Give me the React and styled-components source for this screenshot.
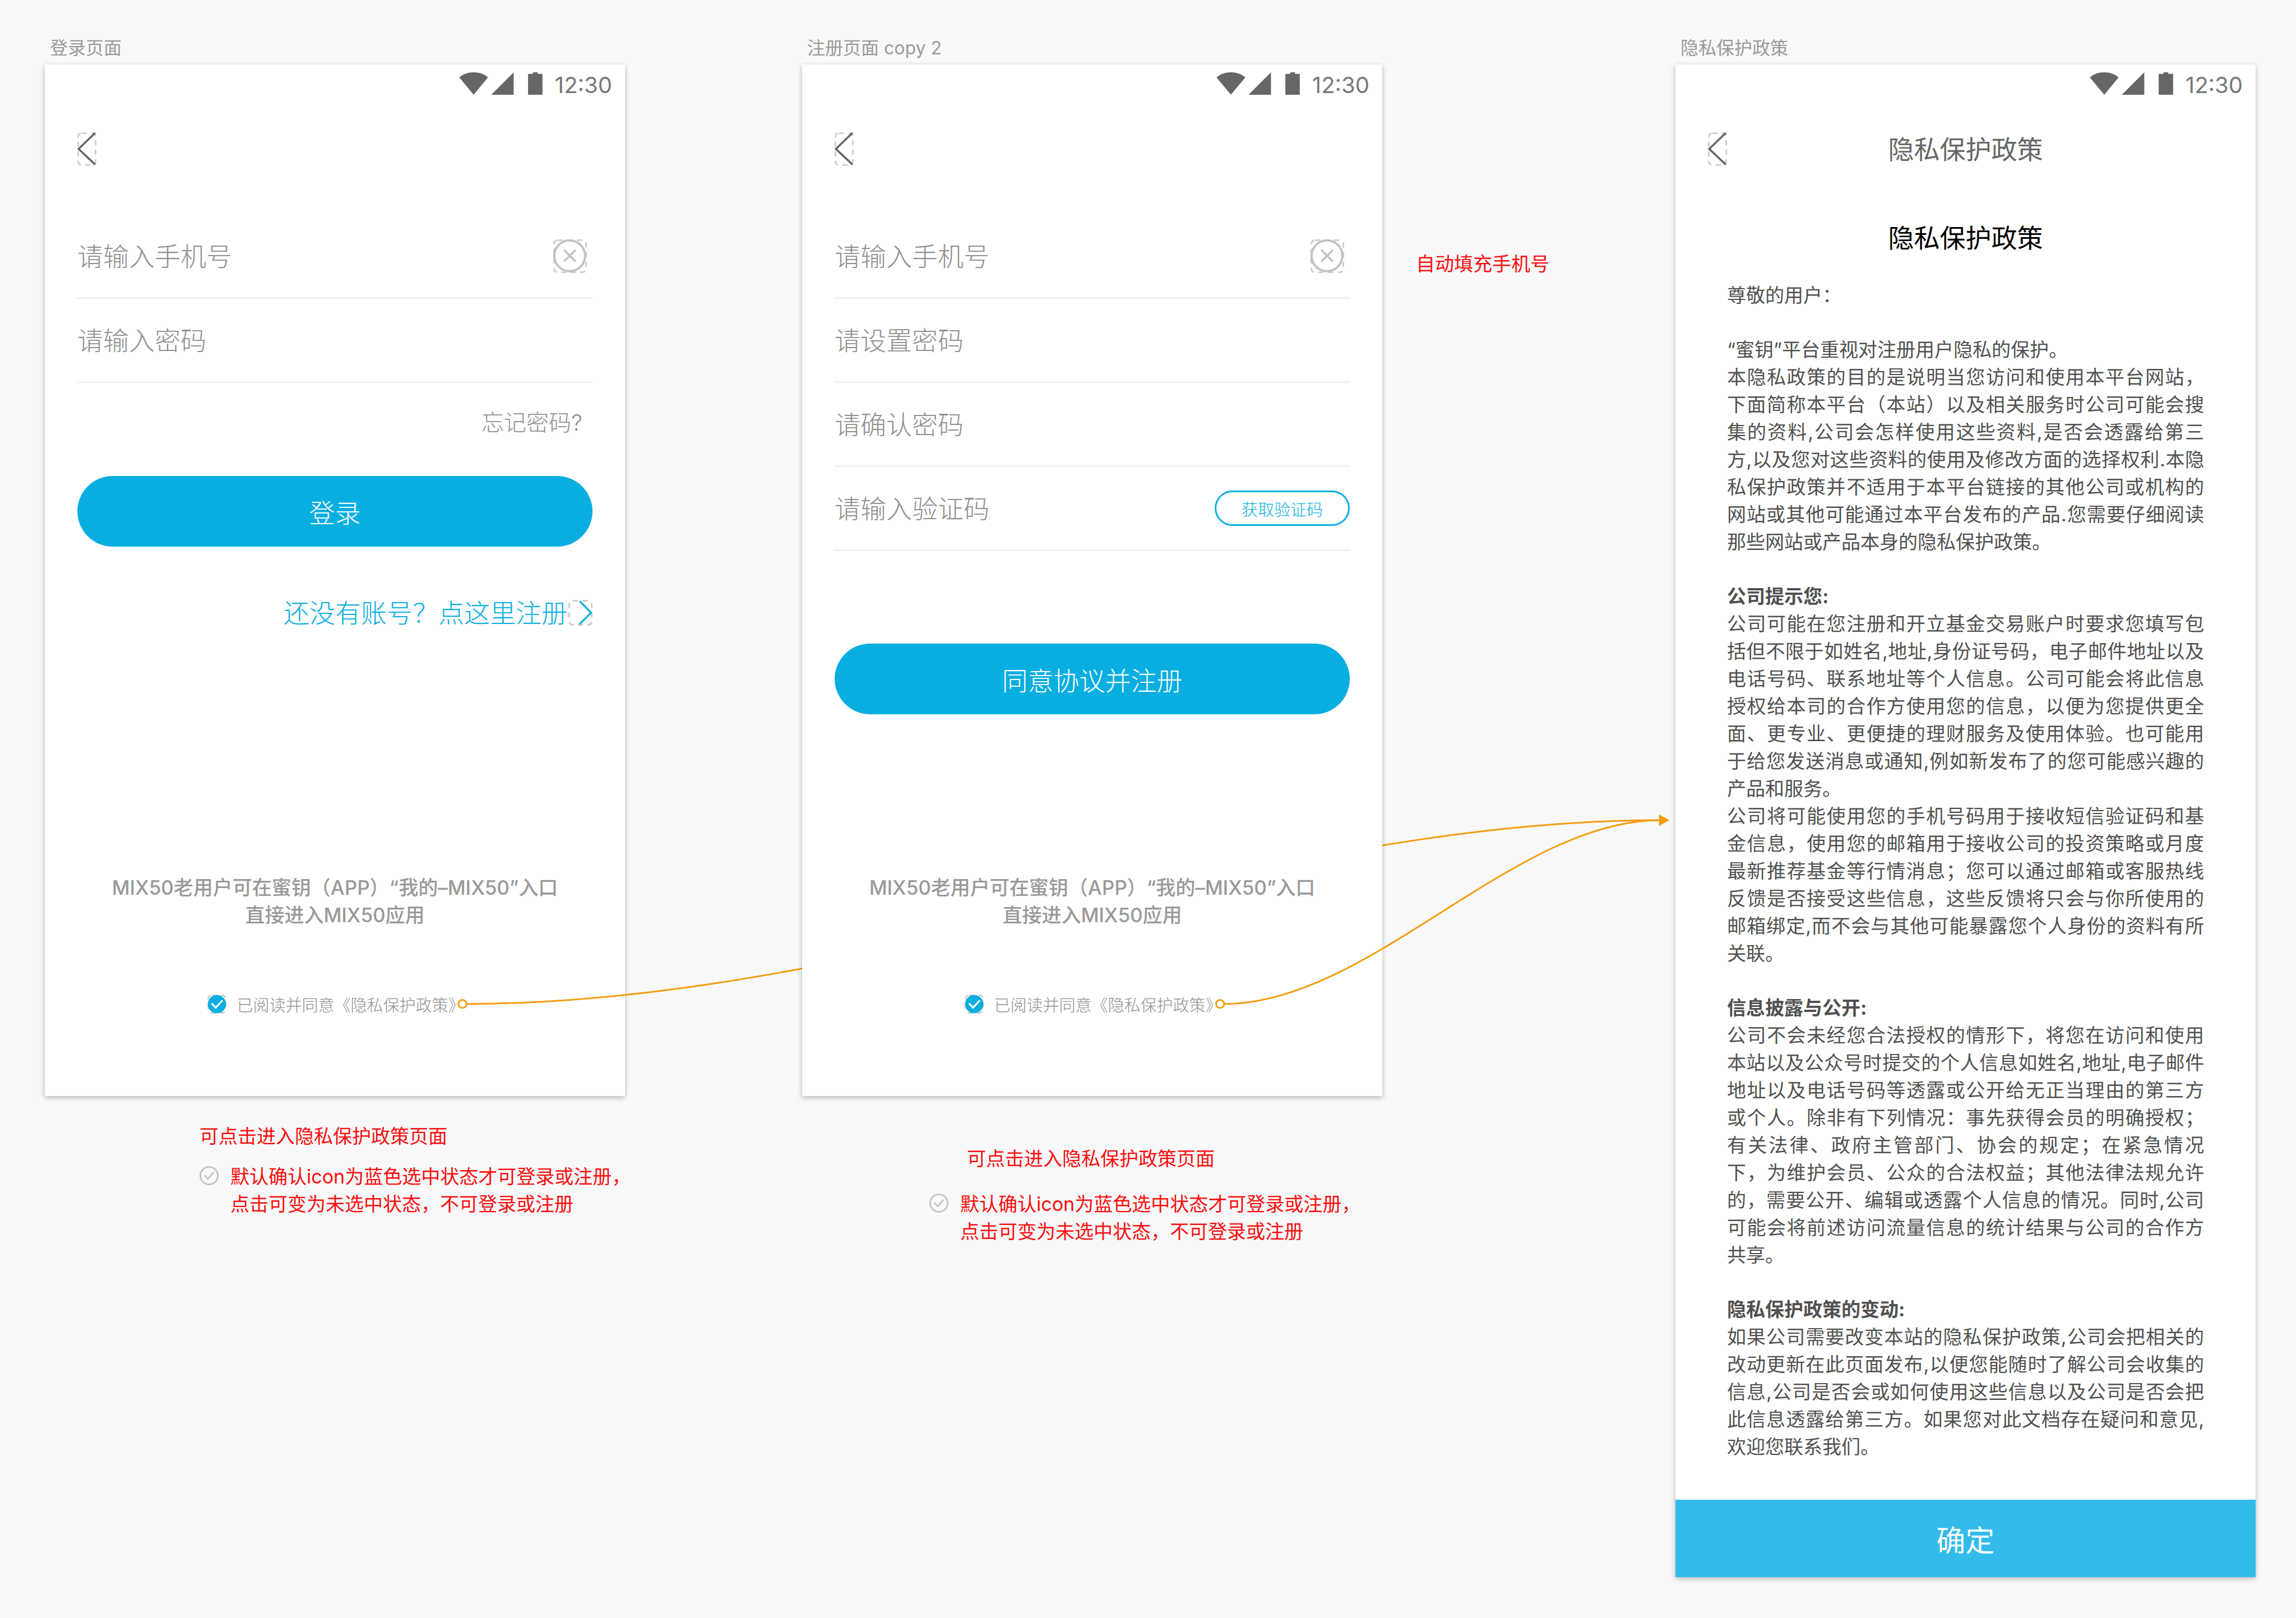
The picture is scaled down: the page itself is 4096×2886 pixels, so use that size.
import React from "react";
import styled, { createGlobalStyle } from "styled-components";

const color = {
  canvas: "#f9f9f9",
  brand: "#09aee0",
  confirm: "#33bceb",
  muted: "#999999",
  field: "#909090",
  line: "#f0f0f0",
  frame: "#cccccc",
  icon: "#666666",
  body: "#505050",
  note: "#fc0d0d",
  flow: "#f59b0c",
};

const size = { small: 29, label: 32, body: 34, hint: 35, link: 40, title: 46, confirm: 52 };

const thin = 300;

const GlobalStyle = createGlobalStyle`
  *, *::before, *::after { box-sizing: border-box; }
  body {
    margin: 0;
    background: ${color.canvas};
    font-family: Inter, "Noto Sans CJK SC", sans-serif;
  }
  h1, h2, h3, p { margin: 0; font-weight: 400; }
  button, input { font-family: inherit; }
  a { color: inherit; text-decoration: none; }
  svg { display: block; flex: none; }
`;

const Canvas = styled.main`
  position: relative;
  display: grid;
  grid-template-columns: 1035fr 316fr 1035fr 523fr 1035fr;
  align-items: start;
  min-height: 100vh;
  padding: 64px 72px 75px 80px;
`;

const Column = styled.section`
  grid-column: ${(p) => p.$column};
  position: relative;
  z-index: ${(p) => p.$layer};
  min-width: 0;
`;

const BoardName = styled.h2`
  padding: 0 9px 7px;
  font-size: ${size.label}px;
  line-height: 44px;
  color: ${color.muted};
`;

const Screen = styled.div`
  display: flex;
  flex-direction: column;
  aspect-ratio: ${(p) => (p.$tall ? "auto" : "9 / 16")};
  background: #ffffff;
  box-shadow: 0 3px 9px rgba(0, 0, 0, 0.28);
`;

const StatusBar = styled.div`
  display: flex;
  justify-content: flex-end;
  align-items: flex-end;
  gap: 22px;
  height: 69px;
  padding: 14px 23px 15px;
`;

const Clock = styled.time`
  font-size: ${size.link}px;
  line-height: 34px;
  color: #777777;
`;

const NavBar = styled.header`
  display: grid;
  grid-template-columns: 60px 1fr 60px;
  align-items: center;
  height: 163px;
  padding: 0 58px;
`;

const NavTitle = styled.h1`
  font-size: ${size.title}px;
  line-height: 60px;
  text-align: center;
  color: ${color.icon};
`;

const IconButton = styled.button`
  display: flex;
  padding: 0;
  border: 0;
  background: none;
`;

const Form = styled.form`
  display: flex;
  flex: 1;
  flex-direction: column;
  padding: 36px 58px 147px;
`;

const Field = styled.div`
  display: flex;
  align-items: center;
  height: 150px;
  padding-right: ${(p) => p.$inset || 0}px;
  border-bottom: 3px solid ${color.line};
`;

const FieldInput = styled.input`
  flex: 1;
  min-width: 0;
  height: 80px;
  padding: 0;
  border: 0;
  outline: 0;
  background: none;
  font-size: ${size.title}px;
  font-weight: ${thin};
  color: ${color.icon};
  &::placeholder { color: ${color.field}; opacity: 1; }
`;

const CodeButton = styled.button`
  width: 241px;
  height: 63px;
  padding: 0;
  border: 3px solid ${color.brand};
  border-radius: 32px;
  background: #ffffff;
  font-size: ${size.small}px;
  font-weight: ${thin};
  color: ${color.brand};
`;

const ForgotLink = styled.a`
  align-self: flex-end;
  margin-top: 41px;
  padding-right: 18px;
  font-size: ${size.link}px;
  font-weight: ${thin};
  line-height: 60px;
  color: ${color.field};
`;

const PrimaryButton = styled.button`
  flex: none;
  height: 126px;
  margin-top: ${(p) => p.$gap}px;
  border: 0;
  border-radius: 63px;
  background: ${color.brand};
  font-size: ${size.title}px;
  font-weight: ${thin};
  color: #ffffff;
`;

const RegisterLink = styled.a`
  display: flex;
  align-self: flex-end;
  align-items: center;
  gap: 2px;
  margin-top: 95px;
  font-size: ${size.title}px;
  font-weight: ${thin};
  line-height: 46px;
  color: ${color.brand};
`;

const Hint = styled.p`
  margin-top: auto;
  font-size: ${size.hint}px;
  font-weight: 500;
  line-height: 49px;
  text-align: center;
  color: ${color.muted};
`;

const Agreement = styled.label`
  display: flex;
  justify-content: center;
  align-items: center;
  gap: 18px;
  height: 34px;
  margin-top: 117px;
  padding-left: 4px;
  font-size: ${size.small}px;
  font-weight: ${thin};
  color: ${color.field};
`;

const HiddenCheck = styled.input`
  position: absolute;
  width: 1px;
  height: 1px;
  margin: 0;
  opacity: 0;
`;

const Notes = styled.aside`
  display: flex;
  flex-direction: column;
  gap: ${(p) => p.$gap}px;
  padding-top: ${(p) => p.$top}px;
  padding-left: ${(p) => p.$left}px;
`;

const Note = styled.p`
  padding-left: ${(p) => p.$indent || 0}px;
  font-size: ${size.body}px;
  line-height: 49px;
  white-space: nowrap;
  color: ${color.note};
`;

const IconNote = styled.div`
  display: flex;
  align-items: flex-start;
  gap: 21px;
  svg { margin-top: 6px; }
`;

const SideNote = styled.aside`
  grid-column: 4;
  padding: 382px 0 0 60px;
`;

const Article = styled.article`
  display: flex;
  flex-direction: column;
  gap: 48px;
  padding: 47px 92px 70px;
  font-size: ${size.body}px;
  line-height: 49px;
  color: ${color.body};
`;

const ArticleTitle = styled.h2`
  font-size: ${size.title}px;
  line-height: 60px;
  text-align: center;
  color: #000000;
`;

const SectionTitle = styled.h3`
  font-size: ${size.body}px;
  font-weight: 700;
`;

const Line = styled.span`
  display: block;
  white-space: nowrap;
  text-align: justify;
  text-align-last: ${(p) => (p.$last ? "left" : "justify")};
`;

const ConfirmButton = styled.button`
  height: 138px;
  border: 0;
  background: ${color.confirm};
  font-size: ${size.confirm}px;
  font-weight: 400;
  color: #ffffff;
`;

const Flow = styled.svg`
  position: absolute;
  top: 0;
  left: 0;
  width: 100%;
  height: auto;
  z-index: ${(p) => p.$layer};
  pointer-events: none;
`;

const Dashes = ({ w, h }) => (
  <rect
    x="2" y="2" width={w - 4} height={h - 4} rx="9"
    fill="none" stroke={color.frame} strokeWidth="4" strokeDasharray="13 11"
  />
);

const StatusIcons = () => (
  <svg width="149" height="40" viewBox="0 0 208 56" fill={color.icon} aria-hidden="true">
    <path d="M36 56 0 12.5C10 4.500 22 0 36 0s26 4.500 36 12.500z" />
    <path d="M136 0v56H80z" />
    <path d="M184 0h12v4h12v52h-36V4h12z" />
  </svg>
);

const BackIcon = () => (
  <svg width="34" height="60" viewBox="0 0 48 84" aria-hidden="true">
    <Dashes w={48} h={84} />
    <path d="M45 1 3 41.500 45 81" fill="none" stroke={color.icon} strokeWidth="5" />
  </svg>
);

const ClearIcon = () => (
  <svg width="60" height="60" viewBox="0 0 84 84" aria-hidden="true">
    <Dashes w={84} h={84} />
    <g fill="none" stroke="#c2c2c2" strokeLinecap="round">
      <circle cx="41" cy="41" r="38.500" strokeWidth="5.500" />
      <path d="M28 27.500 54.500 54M54.500 27.500 28 54" strokeWidth="5" />
    </g>
  </svg>
);

const ForwardIcon = () => (
  <svg width="43" height="46" viewBox="0 0 60 64" aria-hidden="true">
    <Dashes w={60} h={64} />
    <path d="M28 3 56.500 32 28 60" fill="none" stroke={color.brand} strokeWidth="4.500" />
  </svg>
);

const CheckedIcon = () => (
  <svg width="34" height="34" viewBox="0 0 48 48" aria-hidden="true">
    <Dashes w={48} h={48} />
    <circle cx="24" cy="24" r="23" fill={color.brand} />
    <path d="M10.500 22 21 33 38 14.500" fill="none" stroke="#ffffff" strokeWidth="4.500" />
  </svg>
);

const UncheckedIcon = () => (
  <svg width="34" height="34" viewBox="0 0 48 48" fill="none" stroke="#c2c2c2" aria-hidden="true">
    <circle cx="24" cy="24" r="22" strokeWidth="4" />
    <path d="M12.500 23 21 32 36 15" strokeWidth="4" />
  </svg>
);

const TopBars = ({ title }) => (
  <>
    <StatusBar>
      <StatusIcons />
      <Clock>12:30</Clock>
    </StatusBar>
    <NavBar>
      <IconButton type="button" aria-label="返回"><BackIcon /></IconButton>
      {title && <NavTitle>{title}</NavTitle>}
    </NavBar>
  </>
);

const TextField = ({ label, type = "text", inset, children }) => (
  <Field $inset={inset}>
    <FieldInput type={type} placeholder={label} aria-label={label} />
    {children}
  </Field>
);

const PhoneField = () => (
  <TextField label="请输入手机号" type="tel" inset={10}>
    <IconButton type="button" aria-label="清除"><ClearIcon /></IconButton>
  </TextField>
);

const FormFooter = () => (
  <>
    <Hint>
      MIX50老用户可在蜜钥（APP）“我的–MIX50”入口
      <br />
      直接进入MIX50应用
    </Hint>
    <Agreement>
      <HiddenCheck type="checkbox" defaultChecked />
      <CheckedIcon />
      <span>
        已阅读并同意<a href="#policy">《隐私保护政策》</a>
      </span>
    </Agreement>
  </>
);

const BoardNotes = ({ top, left, gap, indent }) => (
  <Notes $top={top} $left={left} $gap={gap}>
    <Note $indent={indent}>可点击进入隐私保护政策页面</Note>
    <IconNote>
      <UncheckedIcon />
      <Note>
        默认确认icon为蓝色选中状态才可登录或注册，
        <br />
        点击可变为未选中状态，不可登录或注册
      </Note>
    </IconNote>
  </Notes>
);

const policy = [
  { paragraphs: [["尊敬的用户："]] },
  {
    paragraphs: [
      ["“蜜钥”平台重视对注册用户隐私的保护。"],
      [
        "本隐私政策的目的是说明当您访问和使用本平台网站，",
        "下面简称本平台（本站）以及相关服务时公司可能会搜",
        "集的资料,公司会怎样使用这些资料,是否会透露给第三",
        "方,以及您对这些资料的使用及修改方面的选择权利.本隐",
        "私保护政策并不适用于本平台链接的其他公司或机构的",
        "网站或其他可能通过本平台发布的产品.您需要仔细阅读",
        "那些网站或产品本身的隐私保护政策。",
      ],
    ],
  },
  {
    title: "公司提示您:",
    paragraphs: [
      [
        "公司可能在您注册和开立基金交易账户时要求您填写包",
        "括但不限于如姓名,地址,身份证号码，电子邮件地址以及",
        "电话号码、联系地址等个人信息。公司可能会将此信息",
        "授权给本司的合作方使用您的信息，以便为您提供更全",
        "面、更专业、更便捷的理财服务及使用体验。也可能用",
        "于给您发送消息或通知,例如新发布了的您可能感兴趣的",
        "产品和服务。",
      ],
      [
        "公司将可能使用您的手机号码用于接收短信验证码和基",
        "金信息，使用您的邮箱用于接收公司的投资策略或月度",
        "最新推荐基金等行情消息；您可以通过邮箱或客服热线",
        "反馈是否接受这些信息，这些反馈将只会与你所使用的",
        "邮箱绑定,而不会与其他可能暴露您个人身份的资料有所",
        "关联。",
      ],
    ],
  },
  {
    title: "信息披露与公开:",
    paragraphs: [
      [
        "公司不会未经您合法授权的情形下，将您在访问和使用",
        "本站以及公众号时提交的个人信息如姓名,地址,电子邮件",
        "地址以及电话号码等透露或公开给无正当理由的第三方",
        "或个人。除非有下列情况：事先获得会员的明确授权；",
        "有关法律、政府主管部门、协会的规定；在紧急情况",
        "下，为维护会员、公众的合法权益；其他法律法规允许",
        "的，需要公开、编辑或透露个人信息的情况。同时,公司",
        "可能会将前述访问流量信息的统计结果与公司的合作方",
        "共享。",
      ],
    ],
  },
  {
    title: "隐私保护政策的变动:",
    paragraphs: [
      [
        "如果公司需要改变本站的隐私保护政策,公司会把相关的",
        "改动更新在此页面发布,以便您能随时了解公司会收集的",
        "信息,公司是否会或如何使用这些信息以及公司是否会把",
        "此信息透露给第三方。如果您对此文档存在疑问和意见,",
        "欢迎您联系我们。",
      ],
    ],
  },
];

const LoginBoard = () => (
  <Column $column={1} $layer={0}>
    <BoardName>登录页面</BoardName>
    <Screen>
      <TopBars />
      <Form>
        <PhoneField />
        <TextField label="请输入密码" type="password" />
        <ForgotLink href="#forgot">忘记密码?</ForgotLink>
        <PrimaryButton type="button" $gap={65}>登录</PrimaryButton>
        <RegisterLink href="#register">
          还没有账号？点这里注册
          <ForwardIcon />
        </RegisterLink>
        <FormFooter />
      </Form>
    </Screen>
    <BoardNotes top={47} left={276} gap={23} indent={0} />
  </Column>
);

const RegisterBoard = () => (
  <Column $column={3} $layer={2}>
    <BoardName>注册页面 copy 2</BoardName>
    <Screen>
      <TopBars />
      <Form>
        <PhoneField />
        <TextField label="请设置密码" type="password" />
        <TextField label="请确认密码" type="password" />
        <TextField label="请输入验证码">
          <CodeButton type="button">获取验证码</CodeButton>
        </TextField>
        <PrimaryButton type="button" $gap={165}>同意协议并注册</PrimaryButton>
        <FormFooter />
      </Form>
    </Screen>
    <BoardNotes top={87} left={227} gap={32} indent={67} />
  </Column>
);

const PolicyBoard = () => (
  <Column $column={5} $layer={2} id="policy">
    <BoardName>隐私保护政策</BoardName>
    <Screen $tall>
      <TopBars title="隐私保护政策" />
      <Article>
        <ArticleTitle>隐私保护政策</ArticleTitle>
        {policy.map((section, i) => (
          <section key={i}>
            {section.title && <SectionTitle>{section.title}</SectionTitle>}
            {section.paragraphs.map((lines, j) => (
              <p key={j}>
                {lines.map((text, k) => (
                  <Line key={k} $last={k === lines.length - 1}>{text}</Line>
                ))}
              </p>
            ))}
          </section>
        ))}
      </Article>
      <ConfirmButton type="button">确定</ConfirmButton>
    </Screen>
  </Column>
);

const FlowLine = ({ layer, d, x }) => (
  <Flow $layer={layer} viewBox="0 0 5700 4016" fill="none" stroke={color.flow} strokeWidth="4" aria-hidden="true">
    <path d={d} />
    <circle cx={x} cy="2492" r="10" fill="#ffffff" />
    <path d="M4119 2022v28l25-14z" fill={color.flow} stroke="none" />
  </Flow>
);

export default function App() {
  return (
    <>
      <GlobalStyle />
      <Canvas>
        <LoginBoard />
        <RegisterBoard />
        <SideNote>
          <Note>自动填充手机号</Note>
        </SideNote>
        <PolicyBoard />
        <FlowLine layer={1} x={1148} d="M1158 2492C2145 2492 3132 2036 4120 2036" />
        <FlowLine layer={3} x={3029} d="M3039 2492C3399 2492 3759 2036 4120 2036" />
      </Canvas>
    </>
  );
}
